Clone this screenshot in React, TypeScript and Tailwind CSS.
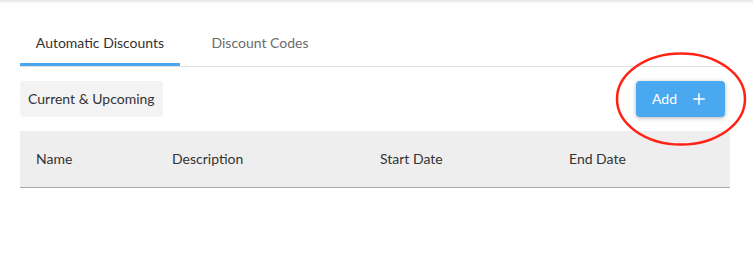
import { Plus } from "lucide-react";

function App() {
  const columns = ["Name", "Description", "Start Date", "End Date"];

  return (
    <div className="relative w-[753px] h-[267px] bg-white overflow-hidden font-['Lato','Liberation_Sans',sans-serif] text-[14px] text-[#333333]">
      <div className="h-[4px] bg-gradient-to-b from-[#e6e6e6] to-white" />

      <div className="px-5">
        <div className="mt-[17px] flex w-[710px] border-b border-[#dddddd]">
          <button className="w-[160px] flex flex-col items-center">
            <span className="pt-[12px] pb-[10px] leading-5 text-[#333333]">
              Automatic Discounts
            </span>
            <span className="h-[3px] w-full bg-[#47a6ee]" />
          </button>
          <button className="px-4 w-[160px] flex flex-col items-center">
            <span className="pt-[12px] pb-[10px] leading-5 text-[#6b6b6b]">
              Discount Codes
            </span>
            <span className="h-[3px] w-full" />
          </button>
        </div>

        <div className="mt-[14px] flex justify-between items-center w-[705px]">
          <div className="h-9 px-2 flex items-center bg-[#f3f3f3] rounded-sm leading-5">
            Current &amp; Upcoming
          </div>
          <button className="h-9 w-[89px] flex items-center pl-4 gap-[13px] bg-[#4aa8f1] text-white rounded-sm shadow-[0_1px_4px_rgba(0,0,0,0.3)]">
            <span className="leading-5">Add</span>
            <Plus size={18} strokeWidth={2} />
          </button>
        </div>

        <div className="mt-[14px] w-[710px] h-[57px] grid grid-cols-[136px_208px_189px_1fr] items-center bg-[#eeeeee] border-b border-[#aaaaaa]">
          {columns.map((col) => (
            <div key={col} className="px-4 leading-5">
              {col}
            </div>
          ))}
        </div>
      </div>

      <svg
        className="absolute left-[614px] top-[51px]"
        width="134"
        height="96"
        viewBox="0 0 134 96"
      >
        <ellipse
          cx="67"
          cy="48"
          rx="64"
          ry="45.5"
          fill="none"
          stroke="#ff2316"
          strokeWidth="2.5"
        />
      </svg>
    </div>
  );
}

export default App;
